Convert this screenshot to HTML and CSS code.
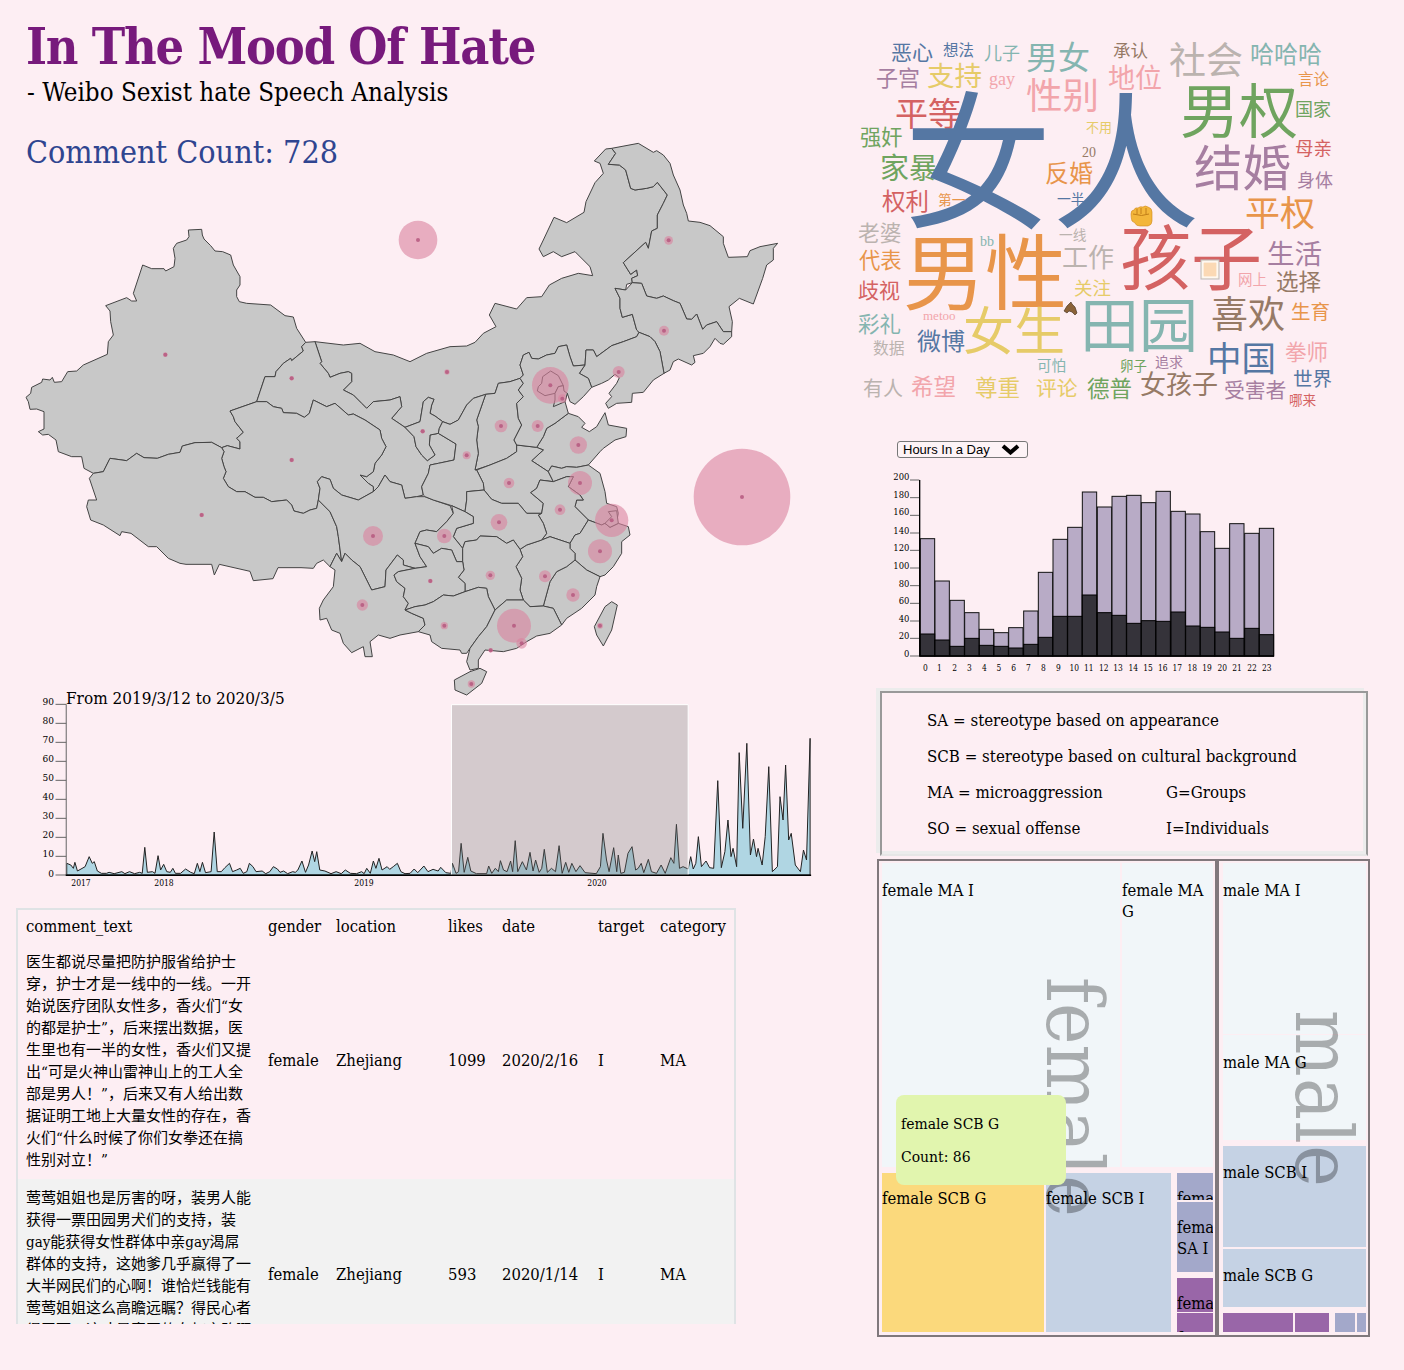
FILE: index.html
```html
<!doctype html>
<html lang="en">
<head>
	<meta charset="UTF-8">
	<title>In The Mood Of Hate</title>
	<link rel="stylesheet" href="styles.css">
</head>
<body>
<div class="page">
	<div class="left">
		<h1>In The Mood Of Hate</h1>
		<h3>- Weibo Sexist hate Speech Analysis</h3>
		<h2>Comment Count: 728</h2>

		<svg class="map" viewBox="0 420 2400 1680" width="800" height="560">
			<g transform="translate(60 675)">
				<path class="prov" d="M505,15 L545,13 L547,30 L552,42 L572,62 L585,78 L608,80 L632,90 L640,120 L660,155 L660,180 L650,195 L650,215 L658,230 L680,235 L752,240 L795,272 L820,276 L830,310 L857,352 L845,365 L850,378 L815,407 L812,400 L790,415 L768,440 L765,455 L735,455 L720,500 L710,530 L630,558 L640,575 L645,590 L670,622 L650,640 L660,650 L660,672 L622,662 L605,668 L575,652 L525,653 L487,663 L480,682 L445,688 L412,700 L372,698 L350,685 L320,707 L270,700 L250,740 L220,745 L192,730 L185,695 L155,695 L115,680 L108,645 L85,628 L68,630 L55,620 L72,612 L72,560 L50,552 L30,553 L25,530 L18,517 L32,505 L35,487 L65,472 L68,462 L90,465 L97,457 L103,472 L125,470 L143,440 L170,438 L190,420 L262,388 L265,350 L280,330 L272,290 L270,258 L257,242 L320,218 L335,228 L350,228 L340,205 L368,120 L395,131 L432,131 L437,138 L462,125 L465,100 L460,70 L470,55 L500,45 L507,35 Z"/>
			</g>
			<g transform="translate(930 1020)">
				<!-- inner mongolia -->
				<path class="prov" d="M15,5 L100,15 L150,10 L195,35 L250,45 L300,65 L350,40 L420,20 L470,18 L495,7 L520,-20 L558,-40 L538,-75 L555,-110 L620,-93 L650,-127 L695,-130 L718,-165 L755,-185 L805,-200 L848,-193 L840,-220 L795,-265 L755,-250 L730,-265 L700,-250 L687,-273 L700,-300 L732,-368 L770,-352 L822,-383 L828,-415 L855,-472 L880,-500 L870,-530 L853,-537 L887,-573 L905,-575 L917,-560 L895,-527 L928,-525 L947,-510 L962,-455 L975,-450 L1010,-455 L1030,-460 L1042,-473 L1072,-435 L1060,-410 L1042,-375 L1042,-335 L1025,-327 L1015,-275 L1007,-293 L940,-232 L962,-197 L980,-210 L983,-193 L965,-185 L967,-172 L950,-167 L947,-150 L915,-155 L930,-125 L930,-95 L937,-68 L967,-77 L980,-30 L987,-23 L980,-10 L940,5 L905,17 L860,50 L850,30 L828,30 L825,75 L790,78 L780,50 L770,15 L745,20 L735,40 L710,45 L685,57 L665,55 L657,37 L640,45 L630,75 L640,105 L630,115 L600,125 L565,130 L555,160 L527,163 L490,175 L470,195 L445,240 L420,253 L398,245 L375,228 L360,220 L365,195 L372,178 L355,172 L340,185 L330,245 L285,262 L245,235 L275,200 L270,170 L240,180 L190,185 L170,205 L155,190 L130,165 L100,150 L125,125 L125,100 L115,95 L90,100 L60,112 L55,100 L30,70 L35,65 Z"/>
				<!-- gansu -->
				<path class="prov" d="M-13,7 L15,5 L35,65 L30,70 L55,100 L60,112 L90,100 L115,95 L125,100 L125,125 L100,150 L130,165 L155,190 L170,205 L190,185 L240,180 L270,170 L275,200 L245,235 L285,262 L312,290 L318,320 L335,345 L352,362 L375,345 L358,315 L360,285 L385,280 L438,312 L432,360 L385,370 L360,375 L355,400 L335,440 L340,465 L320,470 L285,475 L275,435 L240,425 L225,405 L205,440 L190,455 L190,440 L175,430 L150,405 L170,410 L190,395 L195,370 L215,345 L228,320 L215,295 L210,270 L165,240 L130,222 L115,225 L75,190 L50,200 L10,180 L-2,220 L-17,232 L-40,220 L-80,218 L-85,205 L-110,200 L-130,185 L-160,185 L-150,155 L-135,110 L-105,110 L-102,95 L-80,70 L-58,55 L-55,62 L-20,33 L-25,20 Z"/>
				<!-- ningxia -->
				<path class="prov" d="M285,262 L330,245 L340,185 L355,172 L372,178 L365,195 L360,220 L375,228 L398,245 L388,265 L385,280 L360,285 L358,315 L375,345 L352,362 L335,345 L318,320 L312,290 Z"/>
				<!-- qinghai -->
				<path class="prov" d="M-240,213 L-160,185 L-130,185 L-110,200 L-85,205 L-80,218 L-40,220 L-17,232 L-2,220 L10,180 L50,200 L75,190 L115,225 L130,222 L165,240 L210,270 L215,295 L228,320 L215,345 L195,370 L190,395 L170,410 L150,405 L175,430 L190,440 L190,455 L145,480 L95,465 L70,445 L60,418 L35,410 L22,425 L30,445 L25,480 L20,505 L0,510 L-20,520 L-48,513 L-55,495 L-70,480 L-115,485 L-140,472 L-165,472 L-195,455 L-220,455 L-245,440 L-260,415 L-252,395 L-258,380 L-265,355 L-258,335 L-265,323 L-248,317 L-210,327 L-210,305 L-220,295 L-200,277 L-225,245 L-230,230 Z"/>
				<!-- tibet -->
				<path class="prov" d="M-650,400 L-620,395 L-600,355 L-550,362 L-520,340 L-498,353 L-458,355 L-425,343 L-390,337 L-383,318 L-345,308 L-295,307 L-265,323 L-258,335 L-265,355 L-258,380 L-252,395 L-260,415 L-245,440 L-220,455 L-195,455 L-165,472 L-140,472 L-115,485 L-70,480 L-55,495 L-48,513 L-20,520 L0,510 L20,505 L25,480 L60,515 L80,560 L85,590 L95,665 L80,640 L60,680 L40,660 L20,670 L10,685 L-27,683 L-96,683 L-111,716 L-170,722 L-180,694 L-272,673 L-287,705 L-295,673 L-372,673 L-390,670 L-425,655 L-460,620 L-485,620 L-537,580 L-565,575 L-570,587 L-620,555 L-658,540 L-670,500 L-665,480 L-640,480 L-662,415 Z"/>
				<!-- sichuan -->
				<path class="prov" d="M25,480 L30,445 L22,425 L35,410 L60,418 L70,445 L95,465 L145,480 L190,455 L205,440 L225,405 L240,425 L275,435 L285,475 L320,470 L345,470 L370,480 L420,497 L430,520 L410,545 L380,575 L350,570 L330,575 L315,610 L330,650 L350,680 L315,685 L280,675 L280,660 L262,645 L228,690 L225,740 L185,750 L150,680 L125,660 L105,640 L95,665 L85,590 L80,560 L60,515 Z"/>
				<!-- yunnan -->
				<path class="prov" d="M60,680 L80,640 L95,665 L105,640 L125,660 L150,680 L185,750 L225,740 L228,690 L262,645 L280,660 L280,675 L315,685 L265,695 L252,705 L260,725 L285,745 L280,770 L295,790 L285,810 L305,820 L340,835 L345,855 L325,875 L270,885 L240,895 L205,885 L180,905 L187,950 L165,950 L160,920 L125,938 L100,910 L90,880 L65,870 L50,835 L30,840 L28,805 L40,780 L70,740 L75,690 Z"/>
				<!-- shanxi, shandong, henan, jiangsu, anhui, zhejiang, shanghai, fujian, jiangxi -->
				<path class="prov" d="M630,115 L600,125 L565,130 L555,160 L527,163 L500,240 L505,260 L500,300 L505,340 L495,390 L540,375 L590,355 L620,335 L620,315 L612,300 L635,255 L625,235 L620,190 L640,170 L625,150 L640,130 Z"/>
				<path class="prov" d="M775,220 L805,230 L825,250 L815,262 L838,275 L860,260 L885,218 L895,255 L950,265 L948,290 L915,300 L880,325 L870,335 L835,375 L800,382 L770,380 L755,385 L725,378 L715,395 L665,362 L700,330 L680,322 L700,290 L710,265 L735,250 Z"/>
				<path class="prov" d="M620,315 L680,322 L700,330 L665,362 L715,395 L730,425 L690,420 L680,445 L662,458 L700,490 L695,520 L650,520 L625,490 L575,490 L545,478 L522,450 L520,430 L500,390 L540,375 L590,355 L620,335 Z"/>
				<path class="prov" d="M755,385 L770,380 L800,382 L835,375 L870,400 L885,455 L890,490 L920,500 L925,520 L920,545 L885,550 L875,555 L835,540 L795,500 L800,480 L820,480 L810,465 L775,440 L790,410 L770,410 L730,425 L715,395 L725,378 Z"/>
				<path class="prov" d="M690,420 L730,425 L770,410 L790,410 L775,440 L810,465 L820,480 L800,480 L795,500 L835,540 L810,580 L795,585 L780,610 L750,600 L720,590 L695,600 L710,580 L700,550 L685,525 L695,520 L700,490 L662,458 L680,445 Z"/>
				<path class="prov" d="M835,540 L875,555 L885,550 L900,562 L925,550 L955,560 L960,585 L935,605 L935,640 L910,680 L885,705 L870,710 L830,690 L795,660 L795,640 L780,625 L780,610 L795,585 L810,580 Z"/>
				<path class="prov" d="M895,515 L920,512 L925,550 L900,562 L885,550 L905,530 Z"/>
				<path class="prov" d="M795,660 L830,690 L870,710 L860,740 L855,765 L815,805 L770,835 L755,855 L730,805 L700,798 L720,725 L740,695 L770,680 Z"/>
				<path class="prov" d="M695,600 L720,590 L750,600 L780,610 L780,625 L795,640 L795,660 L770,680 L740,695 L720,725 L700,798 L660,800 L640,780 L630,750 L635,715 L618,680 L638,650 L630,628 L650,615 Z"/>
				<!-- shaanxi, hubei, chongqing, hunan, guizhou, guangxi, guangdong, hainan, taiwan -->
				<path class="prov" d="M527,163 L500,240 L505,260 L500,300 L505,340 L495,390 L500,390 L520,430 L522,450 L470,455 L470,480 L465,515 L425,497 L370,480 L345,470 L340,465 L335,440 L355,400 L360,375 L385,370 L432,360 L438,312 L385,280 L388,265 L398,245 L420,253 L445,240 L470,195 L490,175 Z"/>
				<path class="prov" d="M470,455 L522,450 L545,478 L575,490 L625,490 L650,520 L695,520 L685,525 L700,550 L710,580 L695,600 L650,615 L630,628 L610,600 L590,610 L560,590 L510,588 L500,600 L465,605 L458,625 L430,590 L440,565 L490,550 L490,530 L465,515 L470,480 Z"/>
				<path class="prov" d="M425,497 L465,515 L490,530 L490,550 L440,565 L430,590 L458,625 L458,665 L440,665 L425,630 L395,625 L370,640 L355,620 L315,610 L330,575 L350,570 L380,575 L410,545 L430,520 Z"/>
				<path class="prov" d="M465,605 L500,600 L510,588 L560,590 L590,610 L610,600 L630,628 L638,650 L618,680 L635,715 L630,750 L640,780 L590,780 L555,810 L535,770 L530,745 L505,742 L465,755 L465,730 L445,712 L462,690 L458,665 L458,625 Z"/>
				<path class="prov" d="M315,610 L355,620 L370,640 L395,625 L425,630 L440,665 L458,665 L462,690 L445,712 L465,730 L465,755 L430,768 L400,765 L370,785 L345,795 L315,800 L285,810 L295,790 L280,770 L285,745 L260,725 L252,705 L265,695 L315,685 L350,680 L330,650 Z"/>
				<path class="prov" d="M285,810 L315,800 L345,795 L370,785 L400,765 L430,768 L465,755 L505,742 L530,745 L535,770 L555,810 L530,860 L505,890 L480,925 L470,940 L455,940 L450,930 L395,925 L365,905 L360,885 L325,875 L345,855 L340,835 L305,820 Z"/>
				<path class="prov" d="M555,810 L590,780 L640,780 L660,800 L700,798 L730,805 L755,855 L720,880 L680,888 L650,905 L620,925 L580,935 L525,930 L505,960 L505,985 L480,990 L470,965 L480,925 L505,890 L530,860 Z"/>
				<path class="prov" d="M480,995 L510,985 L530,995 L515,1030 L470,1065 L435,1050 L433,1020 Z"/>
				<path class="prov" d="M905,785 L922,795 L905,870 L880,918 L860,885 L853,860 L885,800 Z"/>
			</g>
			<g transform="translate(1380 405)">
				<!-- heilongjiang, jilin, liaoning, hebei, beijing, tianjin -->
				<path class="prov" d="M455,40 L535,25 L580,52 L590,47 L610,60 L630,85 L640,120 L660,165 L670,210 L680,235 L685,258 L720,262 L750,272 L790,305 L790,325 L805,367 L862,365 L870,347 L900,335 L953,325 L940,340 L940,375 L920,390 L908,430 L880,507 L838,490 L807,515 L817,560 L815,590 L790,590 L770,560 L740,570 L728,583 L710,537 L695,553 L680,552 L660,505 L640,497 L610,483 L590,490 L560,483 L545,445 L517,443 L515,430 L533,422 L530,405 L512,418 L490,383 L557,322 L565,340 L575,288 L592,280 L592,240 L610,205 L622,180 L592,142 L580,155 L560,160 L525,165 L512,160 L497,105 L478,90 L445,88 L467,55 Z"/>
				<path class="prov" d="M517,443 L545,445 L560,483 L590,490 L610,483 L640,497 L660,505 L680,552 L695,553 L710,537 L728,583 L740,570 L770,560 L790,590 L815,590 L815,605 L790,628 L780,625 L765,610 L750,635 L730,655 L700,662 L705,682 L695,690 L655,672 L640,680 L630,705 L612,715 L600,650 L585,620 L570,605 L537,592 L530,585 L517,538 L487,547 L480,520 L480,490 L465,460 L497,465 Z"/>
				<path class="prov" d="M537,592 L570,605 L585,620 L600,650 L612,715 L580,735 L550,772 L517,775 L515,802 L470,805 L445,820 L437,805 L455,785 L447,775 L470,745 L478,728 L465,718 L445,735 L425,745 L395,757 L385,730 L358,715 L375,690 L378,645 L400,645 L410,665 L455,632 L490,620 L530,605 Z"/>
				<path class="prov" d="M207,652 L215,670 L235,672 L260,660 L285,655 L295,635 L320,630 L330,665 L340,693 L375,690 L358,715 L385,730 L395,757 L370,785 L345,808 L330,800 L322,775 L315,800 L325,835 L285,865 L260,880 L250,905 L230,937 L170,930 L162,915 L185,870 L175,850 L170,805 L190,785 L175,765 L190,745 L180,730 L190,720 L180,690 L190,660 Z"/>
				<path class="prov" d="M272,708 L295,722 L310,752 L295,755 L285,775 L255,782 L232,768 L235,755 L245,745 L248,725 Z"/>
				<path class="prov" d="M285,775 L295,755 L310,752 L312,768 L322,775 L315,800 L280,815 L285,795 Z"/>
			</g>
			<g transform="translate(930 1020)">
				<circle class="bubble" cx="324" cy="-300" r="58"/>
				<circle class="bubble" cx="1296" cy="471" r="145"/>
				<circle class="bubble" cx="721" cy="136" r="55"/>
				<circle class="bubble" cx="757" cy="176" r="13"/>
				<circle class="bubble" cx="683" cy="258" r="18"/>
				<circle class="bubble" cx="573" cy="258" r="19"/>
				<circle class="bubble" cx="926" cy="96" r="18"/>
				<circle class="bubble" cx="805" cy="315" r="26"/>
				<circle class="bubble" cx="810" cy="429" r="36"/>
				<circle class="bubble" cx="905" cy="541" r="50"/>
				<circle class="bubble" cx="870" cy="634" r="36"/>
				<circle class="bubble" cx="750" cy="509" r="16"/>
				<circle class="bubble" cx="597" cy="429" r="16"/>
				<circle class="bubble" cx="567" cy="547" r="25"/>
				<circle class="bubble" cx="470" cy="346" r="12"/>
				<circle class="bubble" cx="338" cy="274" r="7"/>
				<circle class="bubble" cx="411" cy="96" r="8"/>
				<circle class="bubble" cx="403" cy="588" r="22"/>
				<circle class="bubble" cx="189" cy="588" r="30"/>
				<circle class="bubble" cx="157" cy="795" r="17"/>
				<circle class="bubble" cx="361" cy="723" r="7"/>
				<circle class="bubble" cx="541" cy="706" r="14"/>
				<circle class="bubble" cx="705" cy="709" r="18"/>
				<circle class="bubble" cx="789" cy="765" r="20"/>
				<circle class="bubble" cx="870" cy="857" r="9"/>
				<circle class="bubble" cx="403" cy="857" r="11"/>
				<circle class="bubble" cx="612" cy="857" r="51"/>
				<circle class="bubble" cx="635" cy="910" r="16"/>
				<circle class="bubble" cx="542" cy="931" r="7"/>
				<circle class="bubble" cx="484" cy="1032" r="11"/>
				<circle class="bubble" cx="1062" cy="-28" r="15"/>
				<circle class="bubble" cx="1076" cy="-299" r="13"/>
				<circle class="bubble" cx="-434" cy="44" r="7"/>
				<circle class="bubble" cx="-55" cy="115" r="7"/>
				<circle class="bubble" cx="-55" cy="360" r="7"/>
				<circle class="bubble" cx="-325" cy="525" r="7"/>
				<g class="dots">
					<circle cx="324" cy="-300" r="6"/><circle cx="1296" cy="471" r="6"/><circle cx="721" cy="136" r="6"/><circle cx="757" cy="176" r="6"/>
					<circle cx="683" cy="258" r="6"/><circle cx="573" cy="258" r="6"/><circle cx="926" cy="96" r="6"/><circle cx="805" cy="315" r="6"/>
					<circle cx="810" cy="429" r="6"/><circle cx="905" cy="541" r="6"/><circle cx="870" cy="634" r="6"/><circle cx="750" cy="509" r="6"/>
					<circle cx="597" cy="429" r="6"/><circle cx="567" cy="547" r="6"/><circle cx="470" cy="346" r="6"/><circle cx="338" cy="274" r="6"/>
					<circle cx="411" cy="96" r="6"/><circle cx="403" cy="588" r="6"/><circle cx="189" cy="588" r="6"/><circle cx="157" cy="795" r="6"/>
					<circle cx="361" cy="723" r="6"/><circle cx="541" cy="706" r="6"/><circle cx="705" cy="709" r="6"/><circle cx="789" cy="765" r="6"/>
					<circle cx="870" cy="857" r="6"/><circle cx="403" cy="857" r="6"/><circle cx="612" cy="857" r="6"/><circle cx="635" cy="910" r="6"/>
					<circle cx="542" cy="931" r="6"/><circle cx="484" cy="1032" r="6"/><circle cx="1062" cy="-28" r="6"/><circle cx="1076" cy="-299" r="6"/>
					<circle cx="-434" cy="44" r="6"/><circle cx="-55" cy="115" r="6"/><circle cx="-55" cy="360" r="6"/><circle cx="-325" cy="525" r="6"/>
				</g>
			</g>
		</svg>

		<svg class="timeline" viewBox="30 685 800 210" width="800" height="210">
			<svg x="30" y="685" width="800" height="210" viewBox="0 0 1568 630" preserveAspectRatio="none">
				<path class="area" d="M72,570 L72,535 L80,540 L85,550 L88,532 L93,558 L100,552 L108,545 L116,515 L122,535 L126,530 L132,558 L140,565 L150,565 L155,562 L165,566 L180,560 L186,566 L195,560 L205,566 L215,562 L220,565 L225,487 L230,562 L240,560 L245,565 L251,512 L256,555 L262,538 L268,560 L275,562 L280,550 L285,565 L295,565 L305,552 L315,562 L322,566 L328,535 L333,560 L338,532 L344,563 L355,560 L361,441 L367,560 L375,560 L382,548 L391,535 L397,560 L405,555 L412,550 L418,565 L425,560 L430,535 L437,545 L443,560 L455,558 L462,566 L470,560 L477,545 L485,552 L490,562 L497,558 L505,566 L515,560 L520,562 L525,555 L533,528 L540,562 L546,540 L553,498 L558,530 L562,500 L568,555 L578,558 L590,566 L600,560 L610,566 L618,555 L628,565 L640,566 L650,560 L655,566 L660,550 L667,565 L673,528 L678,550 L684,520 L690,555 L700,545 L705,553 L712,545 L720,535 L727,560 L735,566 L745,565 L753,552 L760,563 L772,543 L780,560 L790,553 L800,558 L805,547 L815,563 L825,565 L828,535 L835,565 L840,560 L845,475 L851,562 L858,517 L864,558 L875,566 L895,566 L899,543 L905,565 L912,550 L918,560 L922,527 L928,555 L935,560 L942,528 L946,560 L951,467 L956,560 L965,530 L973,555 L980,502 L986,558 L991,525 L998,562 L1003,550 L1008,493 L1014,562 L1022,550 L1030,560 L1037,482 L1043,565 L1050,532 L1056,562 L1062,535 L1070,560 L1078,542 L1088,563 L1110,566 L1118,545 L1123,445 L1130,525 L1135,560 L1144,488 L1150,560 L1153,510 L1158,565 L1165,562 L1172,505 L1180,485 L1187,555 L1192,550 L1198,535 L1203,563 L1212,523 L1218,560 L1228,565 L1237,540 L1245,565 L1256,518 L1262,535 L1267,418 L1273,550 L1280,545 L1290,552 L1295,515 L1300,552 L1305,535 L1310,455 L1316,545 L1325,528 L1332,548 L1340,550 L1348,287 L1355,548 L1362,500 L1368,405 L1374,515 L1378,490 L1385,545 L1390,203 L1397,430 L1405,175 L1412,510 L1418,462 L1424,515 L1427,490 L1435,540 L1441,455 L1448,245 L1455,560 L1465,545 L1470,335 L1476,405 L1481,240 L1487,465 L1492,445 L1500,540 L1510,560 L1516,495 L1522,525 L1529,160 L1529,570 Z"/>
				<rect class="brush" x="826" y="59" width="464" height="511"/>
				<path class="axis-y" d="M71,58 V570 M50,58 H71 M50,115 H71 M50,172 H71 M50,229 H71 M50,286 H71 M50,343 H71 M50,400 H71 M50,457 H71 M50,514 H71 M50,570 H71"/>
				<path class="axis-x" d="M70,571 H1531"/>
			</svg>
			<g class="tick-y">
				<text x="54" y="705">90</text><text x="54" y="724">80</text><text x="54" y="743">70</text><text x="54" y="762">60</text><text x="54" y="781">50</text>
				<text x="54" y="800">40</text><text x="54" y="819">30</text><text x="54" y="838">20</text><text x="54" y="857">10</text><text x="54" y="877">0</text>
			</g>
			<g class="tick-x">
				<text x="81" y="886">2017</text><text x="164" y="886">2018</text><text x="364" y="886">2019</text><text x="597" y="886">2020</text>
			</g>
			<text class="range" x="66" y="704">From 2019/3/12 to 2020/3/5</text>
		</svg>

		<div class="table-box">
			<table class="comments">
				<colgroup>
					<col class="c-text"><col class="c-gender"><col class="c-loc"><col class="c-likes"><col class="c-date"><col class="c-target"><col class="c-cat">
				</colgroup>
				<thead>
					<tr><th>comment_text</th><th>gender</th><th>location</th><th>likes</th><th>date</th><th>target</th><th>category</th></tr>
				</thead>
				<tbody>
					<tr>
						<td class="say">医生都说尽量把防护服省给护士<br>穿，护士才是一线中的一线。一开<br>始说医疗团队女性多，香火们“女<br>的都是护士”，后来摆出数据，医<br>生里也有一半的女性，香火们又提<br>出“可是火神山雷神山上的工人全<br>部是男人！”，后来又有人给出数<br>据证明工地上大量女性的存在，香<br>火们“什么时候了你们女拳还在搞<br>性别对立！”</td>
						<td>female</td><td>Zhejiang</td><td>1099</td><td>2020/2/16</td><td>I</td><td>MA</td>
					</tr>
					<tr class="even">
						<td class="say">莺莺姐姐也是厉害的呀，装男人能<br>获得一票田园男犬们的支持，装<br>gay能获得女性群体中亲gay渴屌<br>群体的支持，这她爹几乎赢得了一<br>大半网民们的心啊！谁恰烂钱能有<br>莺莺姐姐这么高瞻远瞩？得民心者<br>得天下，这才是真正的女权之路啊<br>。</td>
						<td>female</td><td>Zhejiang</td><td>593</td><td>2020/1/14</td><td>I</td><td>MA</td>
					</tr>
				</tbody>
			</table>
		</div>
	</div>

	<div class="right">
		<svg class="cloud" viewBox="850 30 500 390" width="500" height="390">
			<text class="blue" x="891" y="60" font-size="21">恶心</text>
			<text class="blue" x="943" y="56" font-size="15.5">想法</text>
			<text class="teal" x="984" y="60" font-size="18">儿子</text>
			<text class="teal" x="1026" y="69" font-size="32">男女</text>
			<text class="brown" x="1113" y="57" font-size="17.5">承认</text>
			<text class="gray" x="1169" y="74" font-size="37">社会</text>
			<text class="teal" x="1250" y="63" font-size="24">哈哈哈</text>
			<text class="purple" x="876" y="86" font-size="22">子宫</text>
			<text class="yellow" x="927" y="86" font-size="27.5">支持</text>
			<text class="pink latin" x="989" y="85" font-size="18">gay</text>
			<text class="pink" x="1026" y="109" font-size="36.5">性别</text>
			<text class="pink" x="1108" y="88" font-size="27">地位</text>
			<text class="green" x="1180" y="133" font-size="59">男权</text>
			<text class="orange" x="1298" y="85" font-size="15.5">言论</text>
			<text class="green" x="1295" y="116" font-size="18">国家</text>
			<text class="red" x="895" y="126" font-size="33">平等</text>
			<text class="yellow" x="1086" y="132" font-size="13">不用</text>
			<text class="green" x="860" y="145" font-size="21.3">强奸</text>
			<text class="green" x="880" y="179" font-size="29">家暴</text>
			<text class="blue" x="904" y="217" font-size="148">女人</text>
			<text class="brown latin" x="1082" y="157" font-size="14">20</text>
			<text class="orange" x="1045" y="182" font-size="24">反婚</text>
			<text class="red" x="1295" y="155" font-size="18.5">母亲</text>
			<text class="purple" x="1194" y="186" font-size="48.5">结婚</text>
			<text class="purple" x="1297" y="187" font-size="18">身体</text>
			<text class="red" x="882" y="210" font-size="23.5">权利</text>
			<text class="orange" x="938" y="205" font-size="13.7">第一</text>
			<text class="blue" x="1057" y="204" font-size="13.8">一半</text>
			<text class="orange" x="1245" y="226" font-size="35">平权</text>
			<text class="gray" x="858" y="241" font-size="21.7">老婆</text>
			<text class="teal latin" x="980" y="246" font-size="14">bb</text>
			<text class="gray" x="1059" y="240" font-size="13.7">一线</text>
			<text class="orange" x="859" y="268" font-size="21.3">代表</text>
			<text class="orange" x="903" y="303" font-size="82">男性</text>
			<text class="gray" x="1062" y="267" font-size="26">工作</text>
			<text class="red" x="1120" y="284" font-size="71">孩子</text>
			<text class="purple" x="1267" y="264" font-size="27.5">生活</text>
			<text class="pink" x="1238" y="285" font-size="14.5">网上</text>
			<text class="brown" x="1276" y="290" font-size="22.5">选择</text>
			<text class="red" x="858" y="298" font-size="21">歧视</text>
			<text class="yellow" x="1074" y="295" font-size="18.5">关注</text>
			<text class="teal" x="858" y="332" font-size="21.5">彩礼</text>
			<text class="pink latin" x="923" y="320" font-size="13">metoo</text>
			<text class="yellow" x="963" y="350" font-size="51">女生</text>
			<text class="teal" x="1080" y="347" font-size="59">田园</text>
			<text class="brown" x="1211" y="328" font-size="37">喜欢</text>
			<text class="orange" x="1291" y="319" font-size="19.5">生育</text>
			<text class="blue" x="917" y="350" font-size="24">微博</text>
			<text class="gray" x="873" y="354" font-size="15.8">数据</text>
			<text class="blue" x="1207" y="371" font-size="34.5">中国</text>
			<text class="pink" x="1285" y="360" font-size="21.5">拳师</text>
			<text class="teal" x="1037" y="371" font-size="14.5">可怕</text>
			<text class="green" x="1120" y="371" font-size="13.4">卵子</text>
			<text class="purple" x="1155" y="367" font-size="14">追求</text>
			<text class="blue" x="1293" y="386" font-size="19.5">世界</text>
			<text class="gray" x="863" y="396" font-size="20">有人</text>
			<text class="pink" x="911" y="395" font-size="22.5">希望</text>
			<text class="yellow" x="975" y="396" font-size="22.5">尊重</text>
			<text class="yellow" x="1036" y="396" font-size="20.8">评论</text>
			<text class="green" x="1087" y="397" font-size="22.5">德普</text>
			<text class="brown" x="1140" y="394" font-size="26">女孩子</text>
			<text class="purple" x="1224" y="398" font-size="20.8">受害者</text>
			<text class="red" x="1289" y="405" font-size="13.6">哪来</text>

			<!-- fist -->
			<g>
				<path class="fist" d="M1131,214 q0,-4 3,-4 q1,-3 4,-2 q2,-2 5,-1 q2,-2 5,0 q4,1 4,5 v9 q0,4 -4,5 h-8 q-4,0 -5,-3 l-3,-2 q-1,-3 -1,-7 Z"/>
				<path class="fist-line" d="M1137,209 v5 M1141,208 v6 M1146,208 v6 M1133,214 q9,3 16,0"/>
			</g>
			<!-- horse -->
			<path class="horse" d="M1064,311 l3,-5 l4,-4 l1,2 l3,3 l2,6 l-2,2 l-3,-3 l-3,-1 l-2,2 Z"/>
			<rect class="box-out" x="1201" y="260" width="18" height="19"/>
			<rect class="box-in" x="1203" y="262" width="14" height="15"/>
		</svg>

		<div class="hours">
			<span>Hours In a Day</span>
			<svg width="19" height="11" viewBox="0 0 19 11"><path d="M2,2 L9.5,8.5 L17,2" fill="none" stroke="#000" stroke-width="4"/></svg>
		</div>

		<svg class="bars" viewBox="0 114 1200 636" width="400" height="212">
			<g class="bar-l">
				<rect x="121" y="326" width="43" height="352"/><rect x="165" y="453" width="43" height="225"/><rect x="210" y="511" width="43" height="167"/><rect x="254" y="548" width="43" height="130"/>
				<rect x="298" y="598" width="43" height="80"/><rect x="342" y="608" width="43" height="70"/><rect x="386" y="593" width="43" height="85"/><rect x="431" y="543" width="43" height="135"/>
				<rect x="475" y="427" width="43" height="251"/><rect x="519" y="328" width="43" height="350"/><rect x="563" y="292" width="43" height="386"/><rect x="607" y="186" width="43" height="492"/>
				<rect x="652" y="231" width="43" height="447"/><rect x="696" y="199" width="43" height="479"/><rect x="740" y="196" width="43" height="482"/><rect x="784" y="218" width="43" height="460"/>
				<rect x="828" y="184" width="43" height="494"/><rect x="873" y="244" width="43" height="434"/><rect x="917" y="252" width="43" height="426"/><rect x="961" y="305" width="43" height="373"/>
				<rect x="1005" y="355" width="43" height="323"/><rect x="1049" y="281" width="43" height="397"/><rect x="1094" y="310" width="43" height="368"/><rect x="1138" y="295" width="43" height="383"/>
			</g>
			<g class="bar-d">
				<rect x="121" y="612" width="43" height="66"/><rect x="165" y="630" width="43" height="48"/><rect x="210" y="649" width="43" height="29"/><rect x="254" y="625" width="43" height="53"/>
				<rect x="298" y="646" width="43" height="32"/><rect x="342" y="649" width="43" height="29"/><rect x="386" y="654" width="43" height="24"/><rect x="431" y="643" width="43" height="35"/>
				<rect x="475" y="622" width="43" height="56"/><rect x="519" y="559" width="43" height="119"/><rect x="563" y="559" width="43" height="119"/><rect x="607" y="495" width="43" height="183"/>
				<rect x="652" y="548" width="43" height="130"/><rect x="696" y="556" width="43" height="122"/><rect x="740" y="580" width="43" height="98"/><rect x="784" y="572" width="43" height="106"/>
				<rect x="828" y="574" width="43" height="104"/><rect x="873" y="546" width="43" height="132"/><rect x="917" y="588" width="43" height="90"/><rect x="961" y="592" width="43" height="86"/>
				<rect x="1005" y="606" width="43" height="72"/><rect x="1049" y="625" width="43" height="53"/><rect x="1094" y="595" width="43" height="83"/><rect x="1138" y="614" width="43" height="64"/>
			</g>
			<path class="bar-ticks" d="M90,150 H118 M90,203 H118 M90,256 H118 M90,309 H118 M90,361 H118 M90,414 H118 M90,467 H118 M90,520 H118 M90,573 H118 M90,625 H118 M90,678 H118"/>
			<path class="bar-axis" d="M119,150 V678 H1182"/>
			<g class="bar-y">
				<text x="88" y="150">200</text><text x="88" y="203">180</text><text x="88" y="256">160</text><text x="88" y="312">140</text><text x="88" y="364">120</text>
				<text x="88" y="417">100</text><text x="88" y="470">80</text><text x="88" y="522">60</text><text x="88" y="576">40</text><text x="88" y="627">20</text><text x="88" y="680">0</text>
			</g>
			<g class="bar-x">
				<text x="136" y="723">0</text><text x="178" y="723">1</text><text x="224" y="723">2</text><text x="268" y="723">3</text><text x="313" y="723">4</text><text x="357" y="723">5</text>
				<text x="401" y="723">6</text><text x="445" y="723">7</text><text x="490" y="723">8</text><text x="535" y="723">9</text><text x="583" y="723">10</text><text x="626" y="723">11</text>
				<text x="671" y="723">12</text><text x="714" y="723">13</text><text x="760" y="723">14</text><text x="804" y="723">15</text><text x="848" y="723">16</text><text x="892" y="723">17</text>
				<text x="937" y="723">18</text><text x="981" y="723">19</text><text x="1027" y="723">20</text><text x="1071" y="723">21</text><text x="1116" y="723">22</text><text x="1160" y="723">23</text>
			</g>
		</svg>

		<div class="legend">
			<p>SA = stereotype based on appearance</p>
			<p>SCB = stereotype based on cultural background</p>
			<p class="two"><span>MA = microaggression</span><span>G=Groups</span></p>
			<p class="two"><span>SO = sexual offense</span><span>I=Individuals</span></p>
		</div>

		<div class="treemap">
			<div class="frame frame-f">
				<div class="t-row t-top">
					<div class="cell pale grow-ma-i"><p>female MA I</p></div>
					<div class="cell pale grow-ma-g"><p>female MA G</p></div>
				</div>
				<div class="t-row t-bottom">
					<div class="cell gold w-scb-g"><p>female SCB G</p></div>
					<div class="cell blue-cell w-scb-i"><p>female SCB I</p></div>
					<div class="t-col">
						<div class="cell lilac h-a"><p>female SA G</p></div>
						<div class="cell lilac h-b"><p>female SA I</p></div>
						<div class="cell violet h-c"><p>female SO G</p></div>
						<div class="cell violet h-d"><p>female SO I</p></div>
					</div>
				</div>
				<div class="big big-f">female</div>
				<div class="tip">
					<p>female SCB G</p>
					<p>Count: 86</p>
				</div>
			</div>
			<div class="frame frame-m">
				<div class="cell pale h-mi"><p>male MA I</p></div>
				<div class="cell pale h-mg"><p>male MA G</p></div>
				<div class="cell blue-cell h-si"><p>male SCB I</p></div>
				<div class="cell blue-cell h-sg"><p>male SCB G</p></div>
				<div class="t-row t-small">
					<div class="cell violet w-1"></div>
					<div class="cell violet w-2"></div>
					<div class="cell lilac w-3"></div>
					<div class="cell lilac w-4"></div>
				</div>
				<div class="big big-m">male</div>
			</div>
		</div>
	</div>
</div>
</body>
</html>
```

FILE: styles.css
```css
html,body{margin:0;padding:0;}
body{
	background:#fdeef3;
	color:#000;
	font-family:"DejaVu Serif Condensed","DejaVu Serif","Noto Sans CJK SC",serif;
}
p{margin:0;}
svg{display:block;}

.page{
	display:flex;
	width:1404px;
	height:1370px;
	overflow:hidden;
}
.left{width:850px;flex:none;}
.right{width:554px;flex:none;}

/* header */
h1{
	margin:18px 0 0 26px;
	font-size:50px;
	line-height:58px;
	font-weight:700;
	letter-spacing:-1.2px;
	color:#771a7c;
	white-space:nowrap;
}
h3{
	margin:0 0 0 27px;
	font-size:25.7px;
	line-height:32px;
	font-weight:400;
}
h2{
	margin:24px 0 0 26px;
	font-size:32px;
	line-height:40px;
	font-weight:400;
	color:#2f4590;
}

/* map */
.map{margin-top:-32px;}
.prov{
	fill:#c8c8c8;
	stroke:#444;
	stroke-width:3;
	stroke-linejoin:round;
}
.bubble{fill:#da829e;opacity:.6;}
.dots circle{fill:#b5587f;opacity:.85;}

/* timeline */
.timeline{margin:-15px 0 0 30px;}
.area{
	fill:#b0d6e3;
	stroke:#222;
	stroke-width:1;
	vector-effect:non-scaling-stroke;
}
.brush{
	fill:#777;
	fill-opacity:.3;
	stroke:#fff;
	stroke-width:1;
	vector-effect:non-scaling-stroke;
}
.axis-y{fill:none;stroke:#666;stroke-width:1;vector-effect:non-scaling-stroke;}
.axis-x{fill:none;stroke:#000;stroke-width:1.5;vector-effect:non-scaling-stroke;}
.tick-y text{font-size:10px;text-anchor:end;}
.tick-x text{font-size:8.5px;text-anchor:middle;}
.range{font-size:17px;}

/* table */
.table-box{
	margin:13px 0 0 16px;
	width:716px;
	height:414px;
	overflow:hidden;
	border:2px solid #dfe3e5;
	border-bottom:none;
}
.comments{
	width:716px;
	table-layout:fixed;
	border-collapse:collapse;
	font-size:16.5px;
}
.c-text{width:242px;}
.c-gender{width:68px;}
.c-loc{width:112px;}
.c-likes{width:54px;}
.c-date{width:96px;}
.c-target{width:62px;}
.c-cat{width:82px;}
.comments th{
	padding:6px 8px;
	height:21px;
	text-align:left;
	font-weight:400;
	white-space:nowrap;
}
.comments td{
	padding:8px;
	line-height:22px;
	vertical-align:middle;
}
.comments .say{font-size:15px;}
.even td{background:#f2f2f2;}

/* word cloud */
.cloud{margin-top:30px;}
.cloud text{font-family:"Noto Sans CJK SC",sans-serif;}
.cloud .latin{font-family:"Liberation Serif",serif;}
.blue{fill:#5577a3;}
.orange{fill:#e8954a;}
.red{fill:#d46262;}
.teal{fill:#85b5b0;}
.green{fill:#6fa45f;}
.yellow{fill:#e6cb68;}
.purple{fill:#a67ea1;}
.pink{fill:#f2a5ab;}
.brown{fill:#967a66;}
.gray{fill:#bbb3af;}
.fist{fill:#f3b63a;stroke:#d08a20;stroke-width:.6;}
.fist-line{fill:none;stroke:#c27f18;stroke-width:1;}
.horse{fill:#8a6238;stroke:#3c2a18;stroke-width:.6;}
.box-out{fill:#fdf0e0;stroke:#bbb;stroke-width:1;}
.box-in{fill:#fbd9b4;stroke:#fff;stroke-width:1;}

/* bars */
.hours{
	display:flex;
	align-items:center;
	justify-content:space-between;
	box-sizing:border-box;
	width:131px;
	height:17px;
	margin:21px 0 0 47px;
	padding:0 7px 0 5px;
	border:1px solid #777;
	border-radius:3px;
	background:#fdf3f6;
	font-family:"Liberation Sans",sans-serif;
	font-size:13px;
}
.bars{margin:10px 0 0 30px;}
.bar-l rect{fill:#b8abc6;stroke:#111;stroke-width:3;}
.bar-d rect{fill:#35333a;stroke:#000;stroke-width:3;}
.bar-ticks{fill:none;stroke:#666;stroke-width:3;}
.bar-axis{fill:none;stroke:#000;stroke-width:4;}
.bar-y text{font-size:28px;text-anchor:end;}
.bar-x text{font-size:25px;text-anchor:middle;}

/* legend */
.legend{
	box-sizing:border-box;
	width:488px;
	height:165px;
	margin:11px 0 0 30px;
	padding:9px 0 0 45px;
	border:2px solid #999;
	border-bottom-color:#e6e6e6;
	box-shadow:-4px -3px 0 #ececec,inset -3px -3px 0 #ececec;
	font-size:16.75px;
	line-height:36px;
}
.two{display:flex;}
.two span:first-child{width:239px;}

/* treemap */
.treemap{
	display:flex;
	margin:3px 0 0 27px;
	width:493px;
	height:478px;
	font-size:16.5px;
	line-height:20.6px;
}
.frame{
	position:relative;
	box-sizing:border-box;
	height:478px;
	border:2px solid #80787c;
	overflow:hidden;
}
.frame-f{
	display:flex;
	flex-direction:column;
	width:341px;
	padding:2px 3px;
	border-right-width:3px;
	gap:6px;
}
.frame-m{
	display:flex;
	flex-direction:column;
	width:152px;
	padding:2px 2px 2px 4px;
	border-left-width:1px;
}
.cell{overflow:hidden;flex:none;}
.cell p{margin-top:16px;}
.cell.pale p{margin-top:18px;}
.frame-m .blue-cell p{margin-top:17px;}
.pale{background:#f1f6f9;}
.gold{background:#fbd97c;}
.blue-cell{background:#c5d2e4;}
.lilac{background:#a3a8ca;}
.violet{background:#9966a8;}

.t-row{display:flex;}
.t-top{height:304px;gap:2px;}
.t-bottom{height:159px;gap:2px;}
.t-col{display:flex;flex-direction:column;margin-left:4px;width:36px;}
.grow-ma-i{width:238px;}
.grow-ma-g{width:91px;}
.w-scb-g{width:162px;}
.w-scb-i{width:125px;}
.h-a{height:27px;}
.h-b{height:70px;margin-top:2px;}
.h-c{height:34px;margin-top:6px;}
.h-d{height:19px;margin-top:1px;}

.h-mi{height:171px;}
.h-mg{height:105px;margin-top:1px;}
.h-si{height:101px;margin-top:6px;}
.h-sg{height:58px;margin-top:2px;}
.t-small{height:19px;margin-top:6px;}
.w-1{width:70px;}
.w-2{width:34px;margin-left:2px;}
.w-3{width:20px;margin-left:6px;}
.w-4{width:9px;margin-left:2px;}

.big{
	position:absolute;
	font-size:78px;
	line-height:1;
	color:rgba(0,0,0,.3);
	transform-origin:0 0;
	transform:rotate(90deg);
	white-space:nowrap;
}
.big-f{left:234px;top:116px;}
.big-m{left:143px;top:149px;letter-spacing:1.5px;}
.tip{
	position:absolute;
	left:17px;
	top:234px;
	box-sizing:border-box;
	width:170px;
	height:90px;
	padding:19px 5px 0;
	border-radius:8px;
	background:#e1f5ae;
	font-size:15.5px;
}
.tip p+p{margin-top:12px;}
```
